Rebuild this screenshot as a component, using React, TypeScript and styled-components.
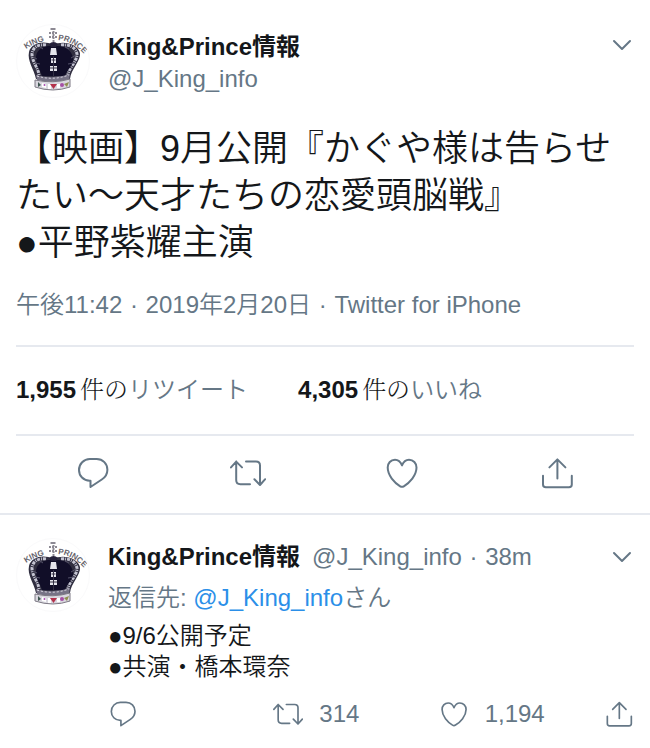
import React, { useId } from "react";
import styled, { createGlobalStyle } from "styled-components";

const GlobalStyle = createGlobalStyle`
  *, *::before, *::after { box-sizing: border-box; }
  body {
    margin: 0;
    background: #fff;
    color: #14171a;
    font-family: "Liberation Sans", "Noto Sans CJK JP", sans-serif;
    font-size: 24px;
    font-weight: 350;
    line-height: 32px;
  }
  h1, p { margin: 0; font-weight: inherit; }
`;

const slate = "#657786";
const rule = "#e6e9ef";

const Main = styled.article`
  padding: 24px 16px 0;
  border-bottom: 2px solid ${rule};
`;

const Header = styled.header`
  display: flex;
  gap: 18px;
  align-items: flex-start;
`;

const Author = styled.div`
  flex: 1;
  min-width: 0;
  padding-top: 7px;
`;

const NameLink = styled.a`
  display: block;
  width: max-content;
  color: #14171a;
  font-weight: 700;
  text-decoration: none;
`;

const Handle = styled.span`
  color: ${slate};
`;

const MoreSlot = styled.div`
  padding-top: 5px;
`;

const MenuButton = styled.button`
  display: flex;
  flex: none;
  width: 24px;
  height: 32px;
  padding: 0;
  border: 0;
  background: none;
  color: ${slate};
  align-items: center;
  justify-content: center;
`;

const AvatarLink = styled.a`
  display: block;
  flex: none;
  width: 74px;
  height: 74px;
  border-radius: 50%;
  overflow: hidden;
  border: 1px solid #fafafb;
  svg { display: block; }
`;

const Headline = styled.h1`
  margin-top: 27px;
  font-size: 36px;
  line-height: 47px;
  span { display: block; }
`;

const Meta = styled.p`
  margin-top: 23px;
  padding-bottom: 24px;
  border-bottom: 2px solid ${rule};
  color: ${slate};
`;

const Dot = styled.span`
  margin: 0 1px;
`;

const Stats = styled.div`
  display: flex;
  gap: 50px;
  padding: 25px 0 28px;
  border-bottom: 2px solid ${rule};
`;

const Stat = styled.a`
  color: ${slate};
  text-decoration: none;
  strong { margin-right: 4px; color: #14171a; font-weight: 700; }
`;

const Counter = styled.span`
  color: #14171a;
  font-family: "Noto Serif CJK JP", "Noto Sans CJK JP", serif;
`;

const Actions = styled.div`
  display: grid;
  grid-template-columns: repeat(4, 1fr);
  justify-items: center;
  padding: 19px 0 22px;
`;

const ActionButton = styled.button`
  display: flex;
  align-items: center;
  gap: 16px;
  padding: 0;
  border: 0;
  background: none;
  color: ${slate};
  font: inherit;
  svg { display: block; flex: none; }
`;

const Reply = styled.article`
  display: flex;
  gap: 18px;
  padding: 19px 16px 16px;
`;

const AvatarColumn = styled.div`
  flex: none;
  padding-top: 4px;
`;

const ReplyBody = styled.div`
  flex: 1;
  min-width: 0;
`;

const ReplyHeader = styled.header`
  display: flex;
  gap: 12px;
  padding-top: 7px;
`;

const ReplyMeta = styled.span`
  flex: 1;
  color: ${slate};
`;

const ReplyingTo = styled.p`
  margin-top: 9px;
  color: ${slate};
  a { color: #2b8fe8; text-decoration: none; }
`;

const ReplyText = styled.p`
  margin-top: 6px;
  line-height: 31px;
  span { display: block; }
`;

const ReplyActions = styled.div`
  display: grid;
  grid-template-columns: 1fr 1fr 1fr auto;
  justify-items: start;
  margin-top: 16px;
`;

const glyphs = {
  reply:
    "M15.5 25.7H14.7C8.4 25.7 4 20.8 4 14.9S8.8 4 14.8 4H21.7C27.8 4 32.4 8.8 32.4 14.7C32.4 18.8 30.3 22.2 26.8 24.5L15.5 32Z",
  retweet:
    "M6.2 6.6V25Q6.2 29.2 10.4 29.2H20M1 12.4L6.2 6.6L12 12.4M16 6.6H26Q30 6.6 30 10.6V29.6M24.4 24.2L30 30L35.2 24.2",
  like:
    "M18 10.4C16.4 6.6 13.9 4.8 11 4.8C6.7 4.8 3.7 8.2 3.7 12.6C3.7 20.5 10.4 27.7 16.2 31.3Q18 32.4 19.8 31.3C25.6 27.7 32.5 20.5 32.5 12.6C32.5 8.2 29.3 4.8 25 4.8C22.1 4.8 19.6 6.6 18 10.4Z",
  share:
    "M4 20.7V29.4Q4 32.2 6.8 32.2H30Q32.8 32.2 32.8 29.4V20.7M18.4 23.4V4.4M10.4 12.4L18.4 4.4L26.4 12.4",
};

function Icon({ name, size }: { name: keyof typeof glyphs; size: number }) {
  return (
    <svg width={size} height={size} viewBox="0 0 36 36" fill="none" stroke="currentColor"
      strokeWidth="2" strokeLinecap="round" strokeLinejoin="round" aria-hidden="true">
      <path d={glyphs[name]} />
    </svg>
  );
}

function More() {
  return (
    <MenuButton type="button" aria-label="その他">
      <svg width="20" height="12" viewBox="0 0 20 12" fill="none" stroke="currentColor"
        strokeWidth="2" strokeLinecap="round" strokeLinejoin="round">
        <path d="M2 2L10 10L18 2" />
      </svg>
    </MenuButton>
  );
}

function Avatar() {
  const id = useId();
  const left = `${id}-left`;
  const right = `${id}-right`;
  return (
    <AvatarLink href="#profile" aria-label="King&Prince情報">
      <svg width="72" height="72" viewBox="1 1 72 72">
        <defs>
          <path id={left} d="M10 25Q20 18 34 16" />
          <path id={right} d="M42 16Q59 17 72 35" />
        </defs>
        <g fill="#66636c" fontFamily="Liberation Sans, sans-serif" fontSize="8" fontWeight="700">
          <text><textPath href={`#${left}`}>KING</textPath></text>
          <text><textPath href={`#${right}`}>PRINCE</textPath></text>
        </g>
        <path d="M37.5 4V18M33 9H42M34.5 5H40.5M33 13H42" stroke="#8c8993" strokeWidth="2" strokeDasharray="2 1" fill="none" />
        <path d="M37 21C28 16 15 19 13 28C11 37 18 45 20 55H54C55 45 65 37 64 29C62 20 47 16 37 21Z" fill="#302e40" />
        <path d="M30 21C22 20 17 23 16 30C16 38 22 43 23 51M45 21C54 20 60 24 61 30C61 38 53 43 52 51" fill="none" stroke="#c4c4d2" strokeWidth="3" strokeDasharray="3 1 1 1" />
        <path d="M32 22C25 23 20 27 20 34C20 42 24 45 26 52H49C51 45 58 42 57 34C56 27 50 22 42 22Z" fill="#110e28" />
        <path d="M17 33L21 35M19 39L24 40M60 31L55 34M58 39L52 40M24 23L27 25M49 23L53 25" stroke="#55536a" strokeWidth="1" />
        <path d="M35 24H40L41 31H34ZM35 34H40V39H35ZM34 42H41V47H34Z" fill="#e5e5ec" />
        <path d="M37.5 32V52M35.5 36H39.5M34 44H41" stroke="#343145" strokeWidth="1" />
        <path d="M33 20Q37.5 16 42 20L40 23H35Z" fill="#25213a" />
        <path d="M20 51Q37 56 54 50L53 56Q37 60 21 56Z" fill="#777386" />
        <path d="M21 52Q37 57 53 51" stroke="#e0dee7" strokeWidth="1" strokeDasharray="2 2" fill="none" />
        <path d="M19 56Q37 60 54 55L54 63Q37 69 19 63Z" fill="#d9d7df" stroke="#7d7984" strokeWidth="1" />
        <path d="M26 59L30 60V64L26 63ZM32 60H35V65H32ZM41 60H44V64H41Z" fill="#fff" />
        <path d="M22 58L25 61L22 63Z" fill="#3f5650" />
        <circle cx="28.500" cy="61" r="1" fill="#a84aaf" />
        <path d="M34 60H41L37.5 65Z" fill="#b4324c" />
        <circle cx="46" cy="61" r="2" fill="#a650a4" />
        <path d="M48 60L53 58L51 63Z" fill="#8e8e50" />
      </svg>
    </AvatarLink>
  );
}

export default function App() {
  return (
    <main>
      <GlobalStyle />
      <Main lang="ja">
        <Header>
          <Avatar />
          <Author>
            <NameLink href="#profile">King&amp;Prince情報</NameLink>
            <Handle>@J_King_info</Handle>
          </Author>
          <MoreSlot><More /></MoreSlot>
        </Header>
        <Headline>
          <span>【映画】9月公開『かぐや様は告らせたい〜天才たちの恋愛頭脳戦』</span>
          <span>●平野紫耀主演</span>
        </Headline>
        <Meta>午後11:42 <Dot>·</Dot> 2019年2月20日 <Dot>·</Dot> Twitter for iPhone</Meta>
        <Stats>
          <Stat href="#retweets"><strong>1,955</strong><Counter>件の</Counter>リツイート</Stat>
          <Stat href="#likes"><strong>4,305</strong><Counter>件の</Counter>いいね</Stat>
        </Stats>
        <Actions>
          <ActionButton type="button" aria-label="返信"><Icon name="reply" size={36} /></ActionButton>
          <ActionButton type="button" aria-label="リツイート"><Icon name="retweet" size={36} /></ActionButton>
          <ActionButton type="button" aria-label="いいね"><Icon name="like" size={36} /></ActionButton>
          <ActionButton type="button" aria-label="共有"><Icon name="share" size={36} /></ActionButton>
        </Actions>
      </Main>
      <Reply lang="ja">
        <AvatarColumn><Avatar /></AvatarColumn>
        <ReplyBody>
          <ReplyHeader>
            <NameLink href="#profile">King&amp;Prince情報</NameLink>
            <ReplyMeta>@J_King_info <Dot>·</Dot> 38m</ReplyMeta>
            <More />
          </ReplyHeader>
          <ReplyingTo>返信先: <a href="#profile">@J_King_info</a>さん</ReplyingTo>
          <ReplyText>
            <span>●9/6公開予定</span>
            <span>●共演・橋本環奈</span>
          </ReplyText>
          <ReplyActions>
            <ActionButton type="button" aria-label="返信"><Icon name="reply" size={30} /></ActionButton>
            <ActionButton type="button" aria-label="リツイート 314"><Icon name="retweet" size={30} />314</ActionButton>
            <ActionButton type="button" aria-label="いいね 1,194"><Icon name="like" size={30} />1,194</ActionButton>
            <ActionButton type="button" aria-label="共有"><Icon name="share" size={30} /></ActionButton>
          </ReplyActions>
        </ReplyBody>
      </Reply>
    </main>
  );
}
